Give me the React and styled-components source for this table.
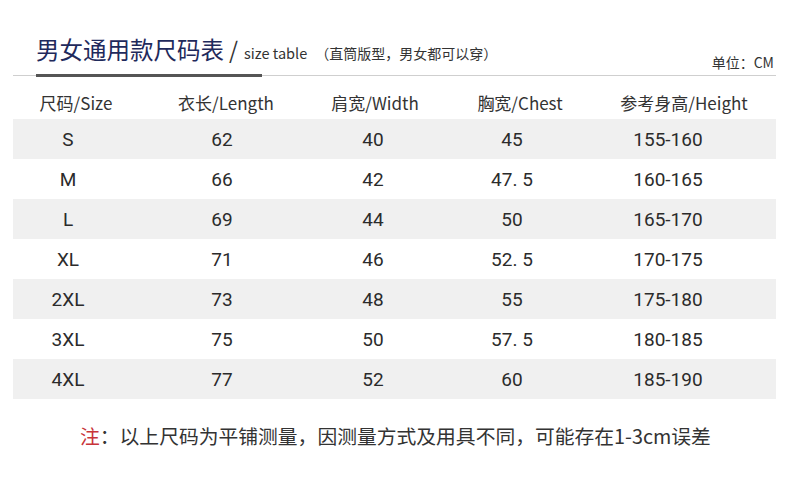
import React from "react";
import styled, { createGlobalStyle } from "styled-components";

const GlobalStyle = createGlobalStyle`
  body {
    margin: 0;
    background: #ffffff;
    font-family: "Noto Sans CJK SC", sans-serif;
    color: #333333;
  }
`;

const columns = [
  { label: "尺码/Size", shift: 16 },
  { label: "衣长/Length", shift: 8 },
  { label: "肩宽/Width", shift: 4 },
  { label: "胸宽/Chest", shift: 16 },
  { label: "参考身高/Height", shift: 32 },
];

const rows = [
  ["S", "62", "40", "45", "155-160"],
  ["M", "66", "42", "47. 5", "160-165"],
  ["L", "69", "44", "50", "165-170"],
  ["XL", "71", "46", "52. 5", "170-175"],
  ["2XL", "73", "48", "55", "175-180"],
  ["3XL", "75", "50", "57. 5", "180-185"],
  ["4XL", "77", "52", "60", "185-190"],
];

function App() {
  return (
    <>
      <GlobalStyle />
      <Page>
        <Header>
          <TitleRow>
            <TitleGroup>
              <TitleMain>男女通用款尺码表</TitleMain>
              <Slash>/</Slash>
              <TitleEn>size table</TitleEn>
              <TitleNote>（直筒版型，男女都可以穿）</TitleNote>
            </TitleGroup>
            <Unit>单位：CM</Unit>
          </TitleRow>
          <Rule>
            <Accent />
          </Rule>
        </Header>

        <Table>
          <HeadRow>
            {columns.map((c) => (
              <HeadCell key={c.label}>{c.label}</HeadCell>
            ))}
          </HeadRow>
          {rows.map((r, i) => (
            <Row key={r[0]} $striped={i % 2 === 0}>
              {r.map((v, j) => (
                <Cell key={j} $shift={columns[j].shift}>
                  {v}
                </Cell>
              ))}
            </Row>
          ))}
        </Table>

        <Note>
          <NoteMark>注</NoteMark>：以上尺码为平铺测量，因测量方式及用具不同，可能存在1-3cm误差
        </Note>
      </Page>
    </>
  );
}

export default App;

const Page = styled.div`
  width: 790px;
  height: 485px;
  padding: 0 14px 0 13px;
  box-sizing: border-box;
`;

const Header = styled.div`
  display: flex;
  flex-direction: column;
`;

const TitleRow = styled.div`
  display: flex;
  align-items: flex-end;
  justify-content: space-between;
  padding-top: 32px;
`;

const TitleGroup = styled.div`
  display: flex;
  align-items: baseline;
  padding-left: 23px;
  padding-bottom: 9px;
`;

const TitleMain = styled.span`
  font-size: 23.5px;
  line-height: 28px;
  color: #1f2a5c;
`;

const Slash = styled.span`
  font-size: 23px;
  color: #333;
  margin: 0 6px 0 5px;
`;

const TitleEn = styled.span`
  font-size: 14.5px;
  color: #333;
`;

const TitleNote = styled.span`
  font-size: 14px;
  color: #333;
  margin-left: 8px;
`;

const Unit = styled.span`
  font-size: 14px;
  line-height: 18px;
  color: #333;
  padding-bottom: 4px;
  padding-right: 2px;
`;

const Rule = styled.div`
  height: 1px;
  background: #cfcfcf;
`;

const Accent = styled.div`
  width: 226px;
  height: 3px;
  margin-left: 23px;
  margin-top: -1px;
  background: #555555;
`;

const Table = styled.div`
  margin-top: 10px;
  display: flex;
  flex-direction: column;
`;

const HeadRow = styled.div`
  display: grid;
  grid-template-columns: 126px 174px 124px 166px 162px;
  height: 33px;
  align-items: center;
`;

const HeadCell = styled.div`
  text-align: center;
  font-size: 17px;
  color: #333;
`;

const Row = styled.div`
  display: grid;
  grid-template-columns: 126px 174px 124px 166px 162px;
  height: 40px;
  align-items: center;
  background: ${(p) => (p.$striped ? "#f0f0f0" : "transparent")};
`;

const Cell = styled.div`
  text-align: center;
  font-family: Roboto, "Noto Sans CJK SC", sans-serif;
  font-size: 19px;
  color: #2b2b2b;
  padding-right: ${(p) => p.$shift}px;
`;

const Note = styled.div`
  margin-top: 24px;
  margin-left: 67px;
  font-size: 19.8px;
  line-height: 26px;
  color: #333;
`;

const NoteMark = styled.span`
  color: #c8343a;
`;
